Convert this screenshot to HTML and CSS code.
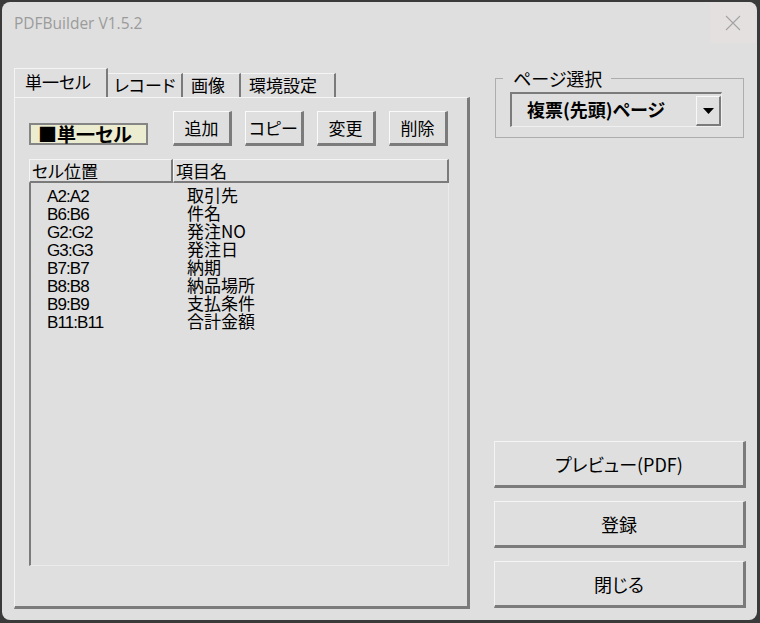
FILE: index.html
```html
<!DOCTYPE html>
<html lang="ja">
<head>
<meta charset="utf-8">
<title>PDFBuilder V1.5.2</title>
<link rel="stylesheet" href="styles.css">
</head>
<body>
<div class="window">
  <div class="titlebar">
    <span class="title">PDFBuilder V1.5.2</span>
    <div class="close">
      <svg width="16" height="16" viewBox="0 0 16 16"><path d="M1 1 L15 15 M15 1 L1 15" stroke="#a3a3a3" stroke-width="1.1" fill="none"/></svg>
    </div>
  </div>
  <div class="content">
    <div class="left">
      <div class="tabs">
        <div class="tab active t1">単一セル</div>
        <div class="tab t2">レコード</div>
        <div class="tab t3">画像</div>
        <div class="tab t4">環境設定</div>
      </div>
      <div class="panel">
        <div class="toolbar">
          <div class="mode">■単一セル</div>
          <button class="btn">追加</button>
          <button class="btn">コピー</button>
          <button class="btn">変更</button>
          <button class="btn">削除</button>
        </div>
        <div class="list">
          <div class="list-head">
            <div class="head-cell h1">セル位置</div>
            <div class="head-cell h2">項目名</div>
          </div>
          <div class="list-body">
            <div class="row"><span class="c1">A2:A2</span><span class="c2">取引先</span></div>
            <div class="row"><span class="c1">B6:B6</span><span class="c2">件名</span></div>
            <div class="row"><span class="c1">G2:G2</span><span class="c2">発注NO</span></div>
            <div class="row"><span class="c1">G3:G3</span><span class="c2">発注日</span></div>
            <div class="row"><span class="c1">B7:B7</span><span class="c2">納期</span></div>
            <div class="row"><span class="c1">B8:B8</span><span class="c2">納品場所</span></div>
            <div class="row"><span class="c1">B9:B9</span><span class="c2">支払条件</span></div>
            <div class="row"><span class="c1">B11:B11</span><span class="c2">合計金額</span></div>
          </div>
        </div>
      </div>
    </div>
    <div class="right">
      <fieldset class="group">
        <legend>ページ選択</legend>
        <div class="combo">
          <span class="combo-text">複票(先頭)ページ</span>
          <div class="drop">
            <svg width="11" height="6" viewBox="0 0 11 6"><polygon points="0,0 11,0 5.5,6" fill="#000"/></svg>
          </div>
        </div>
      </fieldset>
      <div class="actions">
        <button class="big">プレビュー(PDF)</button>
        <button class="big">登録</button>
        <button class="big">閉じる</button>
      </div>
    </div>
  </div>
</div>
</body>
</html>
```

FILE: styles.css
```css
* { box-sizing: border-box; }

body {
  margin: 0;
  width: 760px;
  height: 623px;
  overflow: hidden;
  background: #3a3a3a;
}

.window {
  margin: 2px 0 0 2px;
  width: 755px;
  height: 618px;
  background: #dfdfdf;
  border-radius: 8px;
  display: flex;
  flex-direction: column;
  font-family: "Noto Sans CJK JP", sans-serif;
  font-feature-settings: "palt";
  color: #000;
}

.titlebar {
  height: 42px;
  display: flex;
  align-items: center;
  justify-content: space-between;
  padding-left: 12px;
}

.title {
  font-family: "Open Sans", "Liberation Sans", sans-serif;
  font-size: 15.5px;
  color: #9b9b9b;
}

.close {
  align-self: flex-start;
  width: 46px;
  height: 41px;
  margin-right: 1px;
  background: #e4e0e0;
  border-top-right-radius: 8px;
  display: flex;
  align-items: center;
  justify-content: center;
}

.content {
  display: flex;
  gap: 24px;
  padding: 24px 0 0 12px;
  height: 565px;
}

.left {
  width: 456px;
  display: flex;
  flex-direction: column;
}

.tabs {
  display: flex;
  height: 29px;
  align-items: flex-end;
}

.tab {
  height: 24px;
  border-top: 1px solid #f4f4f4;
  border-right: 2px solid #7a7a7a;
  font-size: 17px;
  line-height: 22px;
  padding-left: 8px;
  white-space: nowrap;
  overflow: hidden;
}

.tab.active {
  height: 29px;
  line-height: 25px;
  padding-left: 10px;
  border-left: 1px solid #f4f4f4;
}

.t1 { width: 94px; }
.t2 { width: 75px; padding-left: 6px; }
.t3 { width: 58px; }
.t4 { width: 95px; }

.panel {
  flex: 1;
  border-top: 1px solid #f4f4f4;
  border-left: 1px solid #f4f4f4;
  border-right: 3px solid #7b7b7b;
  border-bottom: 3px solid #7b7b7b;
  padding: 13px 0 0 14px;
}

.toolbar {
  display: flex;
  align-items: flex-end;
  height: 35px;
}

.mode {
  width: 119px;
  height: 22px;
  margin: 0 25px 1px 0;
  background: #ececd1;
  border: 2px solid #858585;
  font-size: 19px;
  font-weight: bold;
  line-height: 18px;
  padding-left: 7px;
  white-space: nowrap;
}

.btn {
  width: 59px;
  height: 35px;
  margin-right: 13px;
  padding: 0;
  background: #dfdfdf;
  border-top: 1px solid #fafafa;
  border-left: 1px solid #fafafa;
  border-right: 3px solid #7b7b7b;
  border-bottom: 3px solid #7b7b7b;
  font-family: "Noto Sans CJK JP", sans-serif;
  font-feature-settings: "palt";
  font-size: 17px;
  line-height: 30px;
  color: #000;
  text-align: center;
}

.list {
  margin-top: 13px;
  width: 420px;
}

.list-head {
  display: flex;
  height: 24px;
}

.head-cell {
  border-top: 1px solid #f4f4f4;
  border-left: 1px solid #f4f4f4;
  border-right: 2px solid #7b7b7b;
  border-bottom: 2px solid #7b7b7b;
  font-size: 17px;
  line-height: 21px;
  padding-left: 2px;
}

.h1 { width: 144px; }
.h2 { flex: 1; }

.list-body {
  height: 383px;
  border-left: 2px solid #7b7b7b;
  border-right: 1px solid #ebebeb;
  border-bottom: 1px solid #ebebeb;
  padding: 3px 0 0 16px;
}

.row {
  display: flex;
  align-items: flex-start;
  height: 18px;
}

.c1 {
  width: 140px;
  padding-top: 2px;
  font-family: "Liberation Sans", sans-serif;
  font-size: 17px;
  letter-spacing: -0.9px;
  line-height: 18px;
}

.c2 {
  font-size: 17px;
  line-height: 17px;
}

.right {
  width: 252px;
  display: flex;
  flex-direction: column;
  padding-bottom: 1px;
}

.group {
  margin: 0 2px 0 1px;
  padding: 0 0 10px 14px;
  border: 1px solid #adadad;
  min-width: 0;
}

.group legend {
  margin-left: -7px;
  padding: 0 9px 0 10px;
  font-size: 18px;
  line-height: 20px;
}

.combo {
  margin-top: 4px;
  width: 212px;
  height: 35px;
  display: flex;
  border-top: 2px solid #7b7b7b;
  border-left: 2px solid #7b7b7b;
  border-right: 1px solid #f0f0f0;
  border-bottom: 1px solid #f0f0f0;
}

.combo-text {
  flex: 1;
  padding-left: 15px;
  font-size: 18px;
  font-weight: bold;
  line-height: 30px;
  white-space: nowrap;
}

.drop {
  width: 25px;
  height: 30px;
  margin-top: 2px;
  border-top: 1px solid #f8f8f8;
  border-left: 1px solid #f8f8f8;
  border-right: 2px solid #7b7b7b;
  border-bottom: 2px solid #7b7b7b;
  display: flex;
  align-items: center;
  justify-content: center;
}

.actions {
  margin-top: auto;
  display: flex;
  flex-direction: column;
  gap: 13px;
}

.big {
  width: 252px;
  height: 47px;
  padding: 0;
  background: #dfdfdf;
  border-top: 1px solid #f4f4f4;
  border-left: 1px solid #f4f4f4;
  border-right: 3px solid #7b7b7b;
  border-bottom: 3px solid #7b7b7b;
  font-family: "Noto Sans CJK JP", sans-serif;
  font-feature-settings: "palt";
  font-size: 18px;
  line-height: 42px;
  color: #000;
  text-align: center;
}
```
